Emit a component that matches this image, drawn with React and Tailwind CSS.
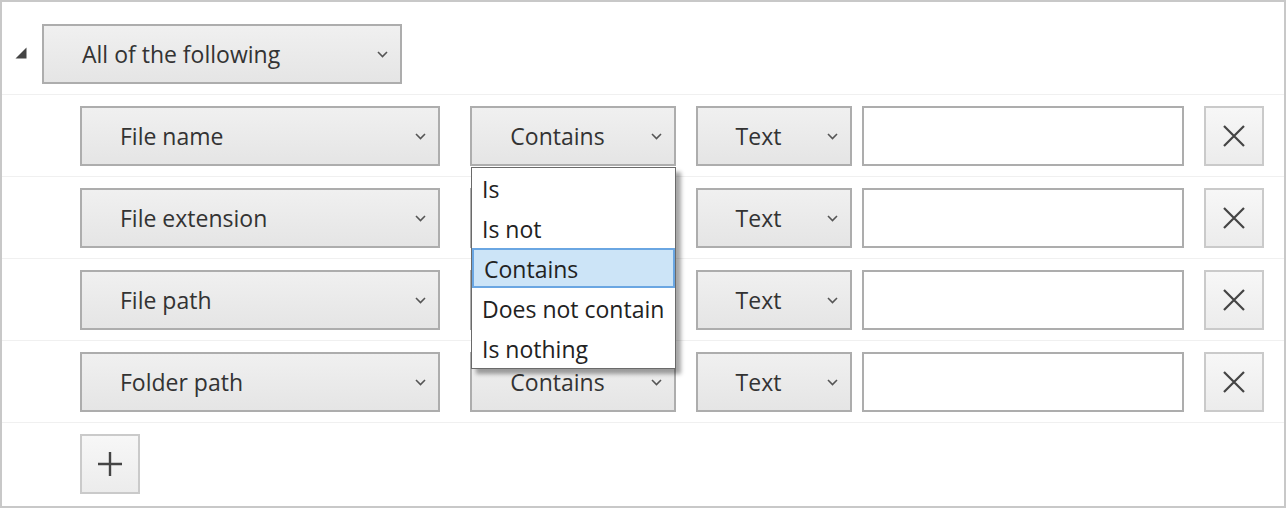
import React from 'react';

const font = { fontFamily: '"Open Sans", "Noto Sans", Arial, sans-serif' };

function Chevron() {
    return (
        <svg width="11" height="7" viewBox="0 0 11 7" className="shrink-0">
            <path d="M1 1 L5.5 5.5 L10 1" fill="none" stroke="#555" strokeWidth="1.6" />
        </svg>
    );
}

function Select({ label, width, center }) {
    return (
        <div
            className={`h-[60px] ${width} shrink-0 flex items-center border-2 border-[#adadad] bg-gradient-to-b from-[#f0f0f0] to-[#e5e5e5] text-[23px] text-[#333] pr-[12px] ${center ? 'pl-[2px]' : 'pl-[38px]'}`}
        >
            <span className={`flex-1 leading-none pt-[1px] ${center ? 'text-center mr-[10px]' : ''}`}>{label}</span>
            <Chevron />
        </div>
    );
}

function IconButton({ children }) {
    return (
        <div className="h-[60px] w-[60px] shrink-0 flex items-center justify-center border-2 border-[#cacaca] bg-gradient-to-b from-[#f7f7f7] to-[#ececec]">
            {children}
        </div>
    );
}

const options = ['Is', 'Is not', 'Contains', 'Does not contain', 'Is nothing'];

function Popup() {
    return (
        <div className="absolute left-[1px] top-[61px] w-[205px] z-10 border border-[#6a6a6a] bg-white shadow-[5px_5px_4px_rgba(0,0,0,0.35)]">
            {options.map((o) => (
                <div
                    key={o}
                    className={`h-[40px] flex items-center pl-[10px] pt-[2px] text-[23px] text-[#222] leading-none whitespace-nowrap ${o === 'Contains' ? 'bg-[#cce4f7] border-2 border-[#6aa6e2] pl-[8px]' : ''}`}
                >
                    {o}
                </div>
            ))}
        </div>
    );
}

const rows = ['File name', 'File extension', 'File path', 'Folder path'];

export default function App() {
    return (
        <div style={font} className="w-[1286px] h-[508px] bg-white border-2 border-[#c8c8c8] overflow-hidden">
            <div className="h-[92px] flex items-start pt-[22px] pl-[13px]">
                <svg width="12" height="12" viewBox="0 0 12 12" className="mt-[23px] mr-[15px]">
                    <polygon points="11.5,0.5 11.5,11.5 0.5,11.5" fill="#444" />
                </svg>
                <Select label="All of the following" width="w-[360px]" />
            </div>
            {rows.map((r, i) => (
                <div key={r} className="h-[82px] border-t border-[#f0f0f0] pt-[11px] pl-[78px] flex items-start">
                    <Select label={r} width="w-[360px]" />
                    <div className="relative ml-[30px]">
                        <Select label="Contains" width="w-[206px]" center />
                        {i === 0 && <Popup />}
                    </div>
                    <div className="ml-[20px]">
                        <Select label="Text" width="w-[156px]" center />
                    </div>
                    <div className="ml-[10px] h-[60px] w-[322px] border-2 border-[#adadad] bg-white" />
                    <div className="ml-[20px]">
                        <IconButton>
                            <svg width="24" height="24" viewBox="0 0 24 24">
                                <path d="M2 2 L22 22 M22 2 L2 22" stroke="#444" strokeWidth="2.2" fill="none" />
                            </svg>
                        </IconButton>
                    </div>
                </div>
            ))}
            <div className="border-t border-[#f0f0f0] pt-[11px] pl-[78px]">
                <IconButton>
                    <svg width="24" height="24" viewBox="0 0 24 24">
                        <path d="M0 12 H24 M12 0 V24" stroke="#444" strokeWidth="2.4" fill="none" />
                    </svg>
                </IconButton>
            </div>
        </div>
    );
}
